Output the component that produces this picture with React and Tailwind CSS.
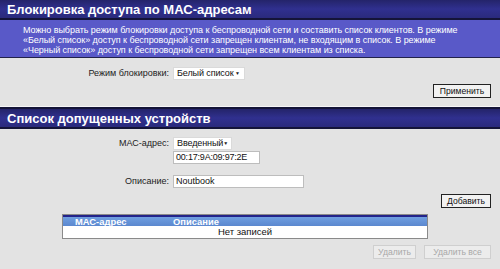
import React from 'react'

function TitleBar({ children }) {
  return (
    <div className="h-[20px] bg-gradient-to-b from-[#24246a] via-[#30308f] to-[#2a2a7c] border-b-2 border-[#141438] flex items-center pl-[7px]">
      <span className="text-white font-bold text-[13px] leading-none whitespace-nowrap">{children}</span>
    </div>
  )
}

function FakeSelect({ value, width }) {
  return (
    <div className={`${width} h-[13px] bg-white flex items-center justify-between pl-[3px] pr-[4px] border border-[#dadada]`}>
      <span className="text-[9px] tracking-[-0.1px] leading-none text-[#111] whitespace-nowrap">{value}</span>
      <span className="text-[5px] leading-none text-[#222]">▼</span>
    </div>
  )
}

function Btn({ children, disabled, width }) {
  return (
    <div
      className={`${width} h-[14px] flex items-center justify-center text-[8.6px] leading-none whitespace-nowrap ${
        disabled
          ? 'border border-[#cfcfcf] bg-[#ececec] text-[#a8a8a8]'
          : 'border border-[#222] bg-[#f2f2f2] text-[#111]'
      }`}
    >
      {children}
    </div>
  )
}

export default function App() {
  return (
    <div
      className="w-[500px] h-[269px] bg-[#e3e3e3] overflow-hidden"
      style={{ fontFamily: '"Liberation Sans", Arial, sans-serif' }}
    >
      <TitleBar>Блокировка доступа по МАС-адресам</TitleBar>
      <div className="h-[38px] bg-[#5959c8] border-b border-[#22224a] pl-[23px] pr-[4px] pt-[5px] text-white text-[9px] leading-[10px] tracking-[-0.05px] whitespace-nowrap">
        <p>Можно выбрать режим блокировки доступа к беспроводной сети и составить список клиентов. В режиме</p>
        <p>«Белый список» доступ к беспроводной сети запрещен клиентам, не входящим в список. В режиме</p>
        <p>«Черный список» доступ к беспроводной сети запрещен всем клиентам из списка.</p>
      </div>

      <div className="flex items-center mt-[9px]">
        <div className="w-[173px] pr-[4px] text-right text-[9px] leading-none text-[#222] whitespace-nowrap">Режим блокировки:</div>
        <FakeSelect value="Белый список" width="w-[72px]" />
      </div>
      <div className="flex justify-end pr-[9px] mt-[4px]">
        <Btn width="w-[58px]">Применить</Btn>
      </div>

      <div className="mt-[8px] border-t border-[#f6f6f6]">
        <div className="border-t-2 border-[#141438]">
          <TitleBar>Список допущенных устройств</TitleBar>
        </div>
      </div>

      <div className="flex items-center mt-[8px]">
        <div className="w-[173px] pr-[4px] text-right text-[9px] leading-none text-[#222] whitespace-nowrap">МАС-адрес:</div>
        <FakeSelect value="Введенный" width="w-[59px]" />
      </div>
      <div className="flex mt-[1px]">
        <div className="w-[173px]" />
        <div className="w-[87px] h-[13px] bg-white border border-[#bdbdbd] flex items-center px-[2px] text-[9px] tracking-[-0.2px] leading-none text-[#111] whitespace-nowrap">
          00:17:9A:09:97:2E
        </div>
      </div>
      <div className="flex items-center mt-[11px]">
        <div className="w-[173px] pr-[4px] text-right text-[9px] leading-none text-[#222] whitespace-nowrap">Описание:</div>
        <div className="w-[131px] h-[13px] bg-white border border-[#bdbdbd] flex items-center px-[2px] text-[9px] leading-none text-[#111]">
          Noutbook
        </div>
      </div>
      <div className="flex justify-end pr-[9px] mt-[6px]">
        <Btn width="w-[50px]">Добавить</Btn>
      </div>

      <div className="ml-[62px] w-[366px] mt-[6px] border border-[#8a8a8a] bg-white">
        <div className="h-[11px] border-t-2 border-[#23238a] bg-gradient-to-b from-[#6f9ee0] to-[#5b88cf] flex items-center text-white font-bold text-[9.4px] leading-none whitespace-nowrap">
          <span className="pl-[12px] w-[110px]">МАС-адрес</span>
          <span>Описание</span>
        </div>
        <div className="h-[12px] flex items-center justify-center text-[9.5px] leading-none text-[#111]">Нет записей</div>
      </div>

      <div className="flex justify-end gap-[8px] pr-[9px] mt-[6px]">
        <Btn disabled width="w-[43px]">Удалить</Btn>
        <Btn disabled width="w-[67px]">Удалить все</Btn>
      </div>
    </div>
  )
}
